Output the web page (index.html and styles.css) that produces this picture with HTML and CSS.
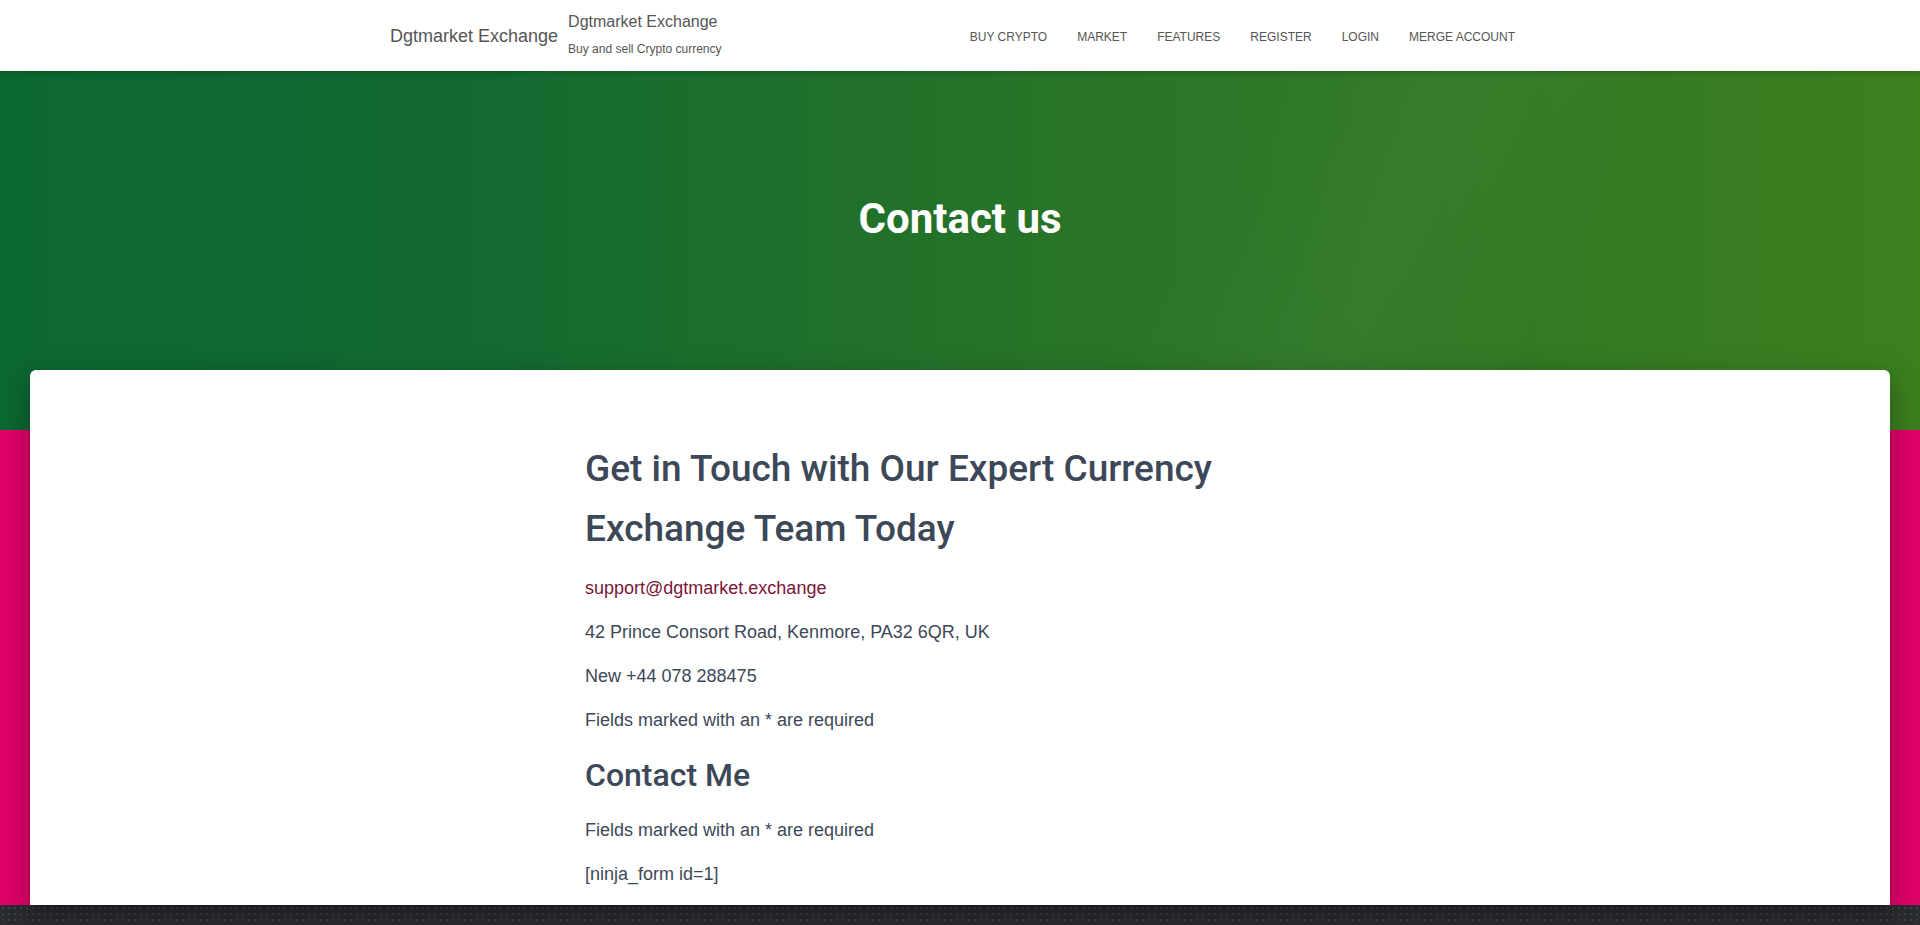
FILE: index.html
```html
<!DOCTYPE html>
<html lang="en">
<head>
<meta charset="utf-8">
<title>Contact us – Dgtmarket Exchange</title>
<link rel="stylesheet" href="styles.css">
</head>
<body>
<nav class="navbar">
  <div class="container nav-inner">
    <div class="brand-group">
      <a class="brand" href="#">Dgtmarket Exchange</a>
      <div class="brand-text">
        <div class="brand-title">Dgtmarket Exchange</div>
        <div class="brand-sub">Buy and sell Crypto currency</div>
      </div>
    </div>
    <ul class="menu">
      <li><a href="#">Buy Crypto</a></li>
      <li><a href="#">Market</a></li>
      <li><a href="#">Features</a></li>
      <li><a href="#">Register</a></li>
      <li><a href="#">Login</a></li>
      <li><a href="#">Merge Account</a></li>
    </ul>
  </div>
</nav>
<header class="hero">
  <h1 class="hero-title">Contact us</h1>
</header>
<section class="main">
  <div class="card">
    <div class="container">
      <div class="content">
        <h2 class="title">Get in Touch with Our Expert Currency Exchange Team Today</h2>
        <p><a class="mail" href="#">support@dgtmarket.exchange</a></p>
        <p>42 Prince Consort Road, Kenmore, PA32 6QR, UK</p>
        <p>New +44 078 288475</p>
        <p>Fields marked with an * are required</p>
        <h3 class="subtitle">Contact Me</h3>
        <p>Fields marked with an * are required</p>
        <p>[ninja_form id=1]</p>
      </div>
    </div>
  </div>
</section>
<footer class="footer"></footer>
</body>
</html>
```
FILE: styles.css
```css
* { box-sizing: border-box; }
html, body { margin: 0; padding: 0; }
body {
  font-family: "Liberation Sans", Arial, sans-serif;
  color: #3c4858;
  background: #fff;
}
a { text-decoration: none; }

.container {
  width: 1170px;
  margin: 0 auto;
  padding: 0 15px;
}

/* NAVBAR */
.navbar {
  position: relative;
  z-index: 3;
  height: 71px;
  background: #fff;
  box-shadow: 0 2px 6px rgba(0,0,0,0.18);
}
.nav-inner {
  height: 71px;
  display: flex;
  align-items: center;
  justify-content: space-between;
}
.brand-group {
  display: flex;
  align-items: center;
  gap: 10px;
}
.brand {
  font-size: 18px;
  color: #555;
  line-height: 30px;
}
.brand-text {
  display: flex;
  flex-direction: column;
  color: #555;
  margin-top: -3px;
}
.brand-title {
  font-size: 16px;
  line-height: 20px;
}
.brand-sub {
  font-size: 12px;
  line-height: 14px;
  margin-top: 10px;
}
.menu {
  list-style: none;
  margin: 0;
  padding: 2px 0 0;
  display: flex;
}
.menu a {
  display: block;
  padding: 15px;
  font-size: 12px;
  line-height: 20px;
  text-transform: uppercase;
  color: #555;
}

/* HERO */
.hero {
  height: 359px;
  padding-top: 123px;
  background:
    linear-gradient(115deg, rgba(255,255,255,0) 60%, rgba(255,255,255,0.03) 70%, rgba(255,255,255,0) 80%),
    linear-gradient(90deg, #0c6831 0%, #136a30 25%, #287428 55%, #327a24 80%, #3d7f1f 100%);
  text-align: center;
}
.hero-title {
  margin: 0;
  font-family: Roboto, "Liberation Sans", sans-serif;
  font-weight: 700;
  font-size: 42px;
  line-height: 50px;
  color: #fff;
}

/* MAIN */
.main {
  margin-top: -60px;
  padding: 0 30px;
  background: linear-gradient(to bottom, transparent 60px, #e0006a 60px);
  position: relative;
  z-index: 2;
}
.card {
  background: #fff;
  border-radius: 6px 6px 0 0;
  min-height: 535px;
  padding-top: 69px;
  box-shadow: 0 16px 24px 2px rgba(0,0,0,0.14), 0 6px 30px 5px rgba(0,0,0,0.12), 0 8px 10px -5px rgba(0,0,0,0.2);
}
.content {
  width: 730px;
  margin-left: 195px;
}
.title {
  margin: 0 0 14px;
  font-family: Roboto, "Liberation Sans", sans-serif;
  font-weight: 500;
  font-size: 37px;
  line-height: 60px;
  color: #3c4858;
}
.subtitle {
  margin: 0 0 14px;
  font-family: Roboto, "Liberation Sans", sans-serif;
  font-weight: 500;
  font-size: 32px;
  line-height: 52px;
  color: #3c4858;
}
.content p {
  margin: 0 0 14px;
  font-size: 18px;
  line-height: 30px;
  color: #3c4858;
}
.mail { color: #7a1537; }

/* FOOTER */
.footer {
  height: 60px;
  background:
    radial-gradient(circle, rgba(120,130,150,0.25) 0.8px, transparent 1.2px) 0 0 / 6px 6px,
    #2a2c30;
}
```
